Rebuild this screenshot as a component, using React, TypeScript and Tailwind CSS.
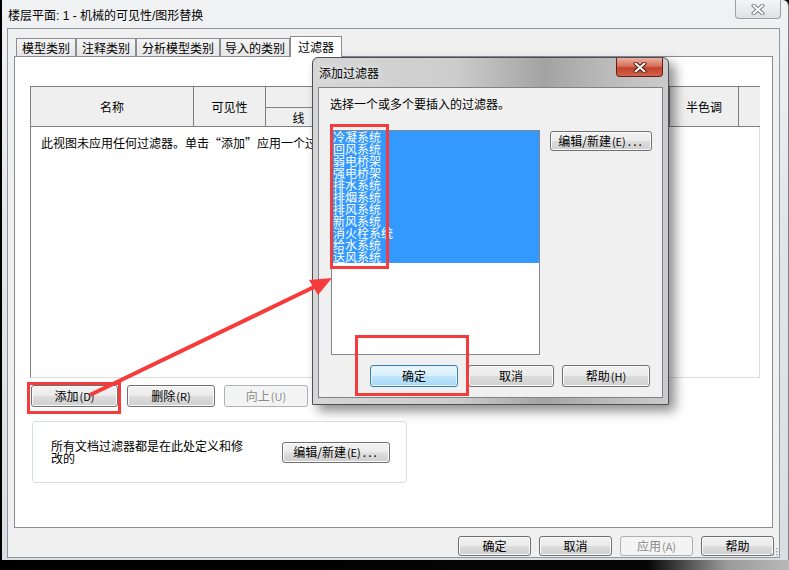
import React from "react";

const btnBase =
  "flex items-center justify-center rounded-[3px] border text-[12px] leading-[14px] whitespace-nowrap";
const btnNormal =
  "border-[#707070] text-black bg-[linear-gradient(180deg,#f2f2f2_0%,#ebebeb_48%,#dddddd_52%,#cfcfcf_100%)] shadow-[inset_0_0_0_1px_#fbfbfb]";
const btnDisabled = "border-[#adb2b5] text-[#8a8a8a] bg-[#f4f4f4]";
const btnDefault =
  "border-[#3c7fb1] text-black bg-[linear-gradient(180deg,#eaf6fd_0%,#d9f0fc_48%,#bee6fd_52%,#a7d9f5_100%)] shadow-[inset_0_0_0_1px_#e3f2fb]";

function Btn({
  children,
  className = "",
  kind = "normal",
}: {
  children: React.ReactNode;
  className?: string;
  kind?: "normal" | "disabled" | "default";
}) {
  const look = kind === "disabled" ? btnDisabled : kind === "default" ? btnDefault : btnNormal;
  return <div className={`${btnBase} ${look} ${className}`}>{children}</div>;
}

// small latin accelerator like (D)
function K({ children }: { children: React.ReactNode }) {
  return <span className="ml-[1px] text-[11px]">{children}</span>;
}

function CloseGlyph({ dark }: { dark: boolean }) {
  return (
    <svg width="14" height="11" viewBox="0 0 14 11">
      <path d="M2.5 1.5 L11.5 9.5 M11.5 1.5 L2.5 9.5" stroke={dark ? "#4b1a12" : "#7a7f85"} strokeWidth="4" strokeLinecap="round" />
      <path d="M2.5 1.5 L11.5 9.5 M11.5 1.5 L2.5 9.5" stroke="#ffffff" strokeWidth="2" strokeLinecap="round" />
    </svg>
  );
}

const tabs = [
  { label: "模型类别", w: "w-[60px]" },
  { label: "注释类别", w: "w-[60px]" },
  { label: "分析模型类别", w: "w-[84px]" },
  { label: "导入的类别", w: "w-[70px]" },
];

const filters = [
  "冷凝系统",
  "回风系统",
  "弱电桥架",
  "强电桥架",
  "排水系统",
  "排烟系统",
  "排风系统",
  "新风系统",
  "消火栓系统",
  "给水系统",
  "送风系统",
];

export default function App() {
  return (
    <div className="relative w-[789px] h-[570px] overflow-hidden bg-black text-[12px] text-black font-['Liberation_Sans','Noto_Sans_CJK_SC',sans-serif]">
      {/* main window */}
      <div className="ml-[2px] w-[787px] h-[560px] flex flex-col rounded-tr-[6px] border-r border-[#7a8086] bg-[linear-gradient(180deg,#f1f2f4_0%,#e3e6e9_40%,#dadee2_100%)]">
        <div className="h-[28px] flex justify-between">
          <div className="pl-[6px] pt-[3px] flex items-center leading-[16px]">楼层平面: 1 - 机械的可见性/图形替换</div>
          <div className="mr-[7px] w-[46px] h-[19px] flex items-center justify-center rounded-b-[4px] border border-t-0 border-[#9aa0a6] bg-[linear-gradient(180deg,#f4f5f6,#dfe2e5)]">
            <CloseGlyph dark={false} />
          </div>
        </div>

        <div className="relative ml-[5px] mr-[8px] h-[530px] border border-[#8e969c] bg-[#f0f0f0] flex flex-col">
          {/* tabs */}
          <div className="mt-[7px] pl-[8px] h-[20px] flex items-end">
            {tabs.map((t) => (
              <div
                key={t.label}
                className={`${t.w} h-[18px] flex items-center justify-center border border-b-0 border-[#898c95] bg-[linear-gradient(180deg,#f4f4f4,#e6e6e6)] leading-[14px] font-['Noto_Sans_CJK_SC',sans-serif]`}
              >
                {t.label}
              </div>
            ))}
            <div className="relative z-10 -mb-px w-[52px] h-[21px] flex items-center justify-center border border-b-0 border-[#898c95] bg-white leading-[14px] font-['Noto_Sans_CJK_SC',sans-serif]">
              过滤器
            </div>
          </div>

          {/* tab panel */}
          <div className="ml-[6px] w-[759px] h-[472px] border border-[#898c95] bg-white pl-[15px] pt-[29px] flex flex-col">
            {/* table */}
            <div className="w-[730px]">
              <div className="h-[41px] flex border-t border-b border-l border-[#808080] bg-[#efefef] font-['Noto_Sans_CJK_SC',sans-serif] leading-[14px]">
                <div className="w-[163px] border-r border-[#808080] flex items-center justify-center">名称</div>
                <div className="w-[72px] border-r border-[#808080] flex items-center justify-center">可见性</div>
                <div className="w-[404px] border-r border-[#808080] flex">
                  <div className="w-[202px] border-r border-[#808080] flex flex-col">
                    <div className="h-[21px] border-b border-[#808080] flex items-center justify-center">投影/表面</div>
                    <div className="flex-1 flex">
                      <div className="w-[66px] border-r border-[#808080] flex items-center justify-center pt-[1px]">线</div>
                      <div className="w-[70px] border-r border-[#808080] flex items-center justify-center">填充图案</div>
                      <div className="flex-1 flex items-center justify-center">透明度</div>
                    </div>
                  </div>
                  <div className="flex-1 flex flex-col">
                    <div className="h-[21px] border-b border-[#808080] flex items-center justify-center">截面</div>
                    <div className="flex-1 flex">
                      <div className="w-[66px] border-r border-[#808080] flex items-center justify-center">线</div>
                      <div className="flex-1 flex items-center justify-center">填充图案</div>
                    </div>
                  </div>
                </div>
                <div className="w-[69px] border-r border-[#808080] flex items-center justify-center">半色调</div>
                <div className="w-[21px]" />
              </div>
              <div className="h-[251px] border-l border-[#808080] border-r border-r-[#dcdcdc] border-b border-b-[#dcdcdc] pl-[10px] pt-[10px] leading-[12px] whitespace-nowrap font-['Noto_Sans_CJK_SC',sans-serif]">
                此视图未应用任何过滤器。单击“添加”应用一个过滤器。
              </div>
            </div>

            {/* add / remove / up */}
            <div className="mt-[7px] ml-[1px] flex gap-[9px] font-['Noto_Sans_CJK_SC',sans-serif]">
              <Btn className="w-[87px] h-[22px]">
                添加<K>(D)</K>
              </Btn>
              <Btn className="w-[88px] h-[22px]">
                删除<K>(R)</K>
              </Btn>
              <Btn kind="disabled" className="w-[84px] h-[22px]">
                向上<K>(U)</K>
              </Btn>
            </div>

            {/* group box */}
            <div className="mt-[14px] ml-[2px] w-[375px] h-[62px] rounded-[3px] border border-[#d5dfe5] flex items-center font-['Noto_Sans_CJK_SC',sans-serif]">
              <div className="ml-[18px] w-[196px] leading-[12px]">所有文档过滤器都是在此处定义和修改的</div>
              <Btn className="ml-[35px] w-[108px] h-[21px]">
                编辑/新建<K>(E)</K>
                <span className="ml-[2px] tracking-[2px]">...</span>
              </Btn>
            </div>
          </div>

          {/* bottom buttons */}
          <div className="mt-[8px] pr-[5px] flex justify-end gap-[8px] font-['Noto_Sans_CJK_SC',sans-serif]">
            <Btn className="w-[73px] h-[20px]">确定</Btn>
            <Btn className="w-[73px] h-[20px]">取消</Btn>
            <Btn kind="disabled" className="w-[73px] h-[20px]">
              应用<K>(A)</K>
            </Btn>
            <Btn className="w-[73px] h-[20px]">帮助</Btn>
          </div>

          {/* size grip */}
          <svg className="absolute right-[1px] bottom-[1px]" width="9" height="9" viewBox="0 0 9 9">
            {[
              [7, 1],
              [7, 4],
              [4, 4],
              [7, 7],
              [4, 7],
              [1, 7],
            ].map(([x, y]) => (
              <rect key={`${x}-${y}`} x={x} y={y} width="1.5" height="1.5" fill="#a0a4a8" />
            ))}
          </svg>
        </div>
      </div>
      <div className="h-[10px] bg-[linear-gradient(90deg,#000000_0%,#050505_82%,#9a9a9a_92%,#b8b8b8_100%)]" />

      {/* child dialog: 添加过滤器 */}
      <div className="absolute left-[312px] top-[57px] w-[357px] h-[348px] flex flex-col rounded-t-[6px] border border-[#4d4f52] bg-[linear-gradient(90deg,#d6d6d6_0%,#cdcdcd_40%,#a3a3a3_65%,#b9b9b9_82%,#cbcbcb_100%)] shadow-[6px_6px_12px_rgba(0,0,0,0.45)]">
        <div className="h-[29px] flex justify-between">
          <div className="pl-[6px] pt-[1px] flex items-center leading-[14px] font-['Noto_Sans_CJK_SC',sans-serif] [text-shadow:0_0_6px_#ffffff]">
            添加过滤器
          </div>
          <div className="mr-[5px] w-[47px] h-[19px] flex items-center justify-center rounded-b-[4px] border border-t-0 border-[#5e2218] bg-[linear-gradient(180deg,#eab0a2_0%,#d9705b_45%,#c2412a_55%,#d2644c_100%)]">
            <CloseGlyph dark />
          </div>
        </div>
        <div className="mx-[5px] h-[311px] border border-[#7f8388] bg-[#f0f0f0] flex flex-col font-['Noto_Sans_CJK_SC',sans-serif]">
          <div className="pl-[11px] pt-[10px] leading-[12px]">选择一个或多个要插入的过滤器。</div>
          <div className="mt-[20px] ml-[12px] flex items-start">
            <div className="w-[209px] h-[225px] border border-[#828790] bg-white">
              {filters.map((f) => (
                <div key={f} className="h-[12px] bg-[#3399ff] pl-[1px] text-white leading-[12px] whitespace-nowrap">
                  {f}
                </div>
              ))}
            </div>
            <Btn className="ml-[10px] mt-[1px] w-[102px] h-[20px]">
              编辑/新建<K>(E)</K>
              <span className="ml-[2px] tracking-[2px]">...</span>
            </Btn>
          </div>
          <div className="mt-[10px] ml-[51px] flex">
            <Btn kind="default" className="w-[88px] h-[22px]">
              确定
            </Btn>
            <Btn className="ml-[10px] w-[86px] h-[22px]">取消</Btn>
            <Btn className="ml-[8px] w-[88px] h-[22px]">
              帮助<K>(H)</K>
            </Btn>
          </div>
        </div>
      </div>

      {/* red annotations */}
      <div className="absolute left-[27px] top-[382px] w-[94px] h-[32px] border-[3px] border-[#f63b3b]" />
      <div className="absolute left-[330px] top-[124px] w-[59px] h-[145px] border-[3px] border-[#f63b3b]" />
      <div className="absolute left-[355px] top-[335px] w-[114px] h-[61px] border-[3px] border-[#f63b3b]" />
      <svg className="absolute left-0 top-0 pointer-events-none" width="789" height="570">
        <line x1="90" y1="395" x2="314" y2="287" stroke="#f63b3b" strokeWidth="4" />
        <polygon points="332,278 309,280 318,295" fill="#f63b3b" />
      </svg>
    </div>
  );
}
